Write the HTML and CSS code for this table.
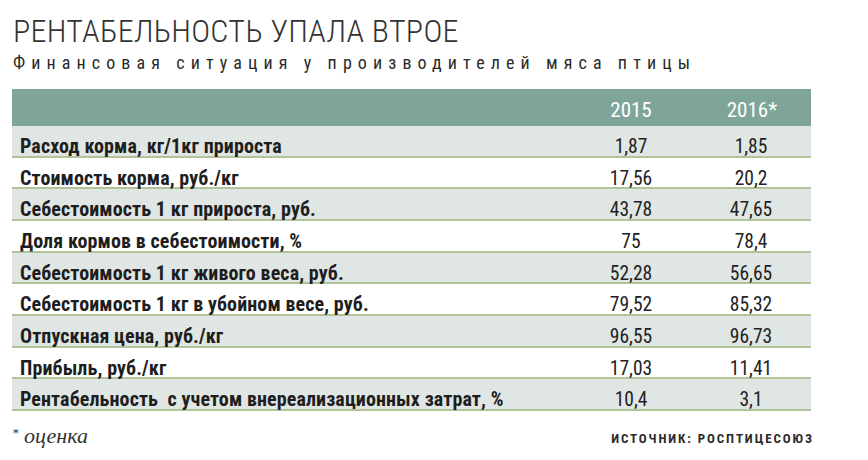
FILE: index.html
```html
<!DOCTYPE html>
<html lang="ru">
<head>
<meta charset="utf-8">
<link rel="stylesheet" href="styles.css">
</head>
<body>
<div class="page">
  <h1 class="title">РЕНТАБЕЛЬНОСТЬ УПАЛА ВТРОЕ</h1>
  <p class="subtitle">Финансовая ситуация у производителей мяса птицы</p>
  <div class="table">
    <div class="head">
      <div class="cell-label"></div>
      <div class="cell-num">2015</div>
      <div class="cell-num">2016*</div>
    </div>
    <div class="row shade"><div class="cell-label">Расход корма, кг/1кг прироста</div><div class="cell-num">1,87</div><div class="cell-num">1,85</div></div>
    <div class="row"><div class="cell-label">Стоимость корма, руб./кг</div><div class="cell-num">17,56</div><div class="cell-num">20,2</div></div>
    <div class="row shade"><div class="cell-label">Себестоимость 1 кг прироста, руб.</div><div class="cell-num">43,78</div><div class="cell-num">47,65</div></div>
    <div class="row"><div class="cell-label">Доля кормов в себестоимости, %</div><div class="cell-num">75</div><div class="cell-num">78,4</div></div>
    <div class="row shade"><div class="cell-label">Себестоимость 1 кг живого веса, руб.</div><div class="cell-num">52,28</div><div class="cell-num">56,65</div></div>
    <div class="row"><div class="cell-label">Себестоимость 1 кг в убойном весе, руб.</div><div class="cell-num">79,52</div><div class="cell-num">85,32</div></div>
    <div class="row shade"><div class="cell-label">Отпускная цена, руб./кг</div><div class="cell-num">96,55</div><div class="cell-num">96,73</div></div>
    <div class="row"><div class="cell-label">Прибыль, руб./кг</div><div class="cell-num">17,03</div><div class="cell-num">11,41</div></div>
    <div class="row shade"><div class="cell-label">Рентабельность&nbsp; с учетом внереализационных затрат, %</div><div class="cell-num">10,4</div><div class="cell-num">3,1</div></div>
  </div>
  <div class="footer">
    <span class="note"><span class="star">*</span> оценка</span>
    <span class="source">ИСТОЧНИК: РОСПТИЦЕСОЮЗ</span>
  </div>
</div>
</body>
</html>
```
FILE: styles.css
```css
html, body {
  margin: 0;
  padding: 0;
  background: #ffffff;
}
.page {
  width: 868px;
  height: 460px;
  padding: 0 0 0 12px;
  box-sizing: border-box;
  color: #222222;
  font-family: Roboto, "Open Sans", sans-serif;
  font-stretch: 75%;
}
.title {
  margin: 0;
  padding: 13px 0 0 1px;
  font-size: 32px;
  line-height: 36px;
  font-weight: 300;
  font-stretch: 87%;
  color: #333333;
  letter-spacing: 0.3px;
}
.subtitle {
  margin: 0;
  padding: 2px 0 0 1px;
  font-size: 18px;
  line-height: 23px;
  font-weight: 400;
  letter-spacing: 6.1px;
  color: #2a2a2a;
}
.table {
  width: 799px;
  margin-top: 15px;
}
.head, .row {
  display: grid;
  grid-template-columns: 559px 120px 120px;
}
.head {
  height: 37px;
  background: #7fa59b;
  color: #ffffff;
  font-size: 21px;
  line-height: 22px;
  padding-top: 10px;
  box-sizing: border-box;
}
.head .cell-num {
  text-align: center;
}
.head .cell-num:last-child {
  padding-left: 2px;
}
.row {
  height: 31.67px;
  box-sizing: border-box;
  border-bottom: 2px solid #b2c29b;
  padding-top: 11px;
  font-size: 19.5px;
  line-height: 19px;
}
.row.shade {
  background: #dfe6e3;
}
.cell-label {
  padding-left: 8px;
  font-weight: 700;
  font-size: 20px;
  letter-spacing: 0.1px;
  color: #1e1e1e;
}
.cell-num {
  text-align: center;
  font-weight: 400;
}
.footer {
  display: flex;
  justify-content: space-between;
  align-items: baseline;
  width: 802px;
  margin-top: 12px;
}
.note {
  font-family: "Liberation Serif", "DejaVu Serif", serif;
  font-style: italic;
  font-stretch: 100%;
  font-size: 22px;
  color: #333333;
}
.star {
  font-size: 13px;
  vertical-align: 6px;
}
.source {
  font-size: 13px;
  font-weight: 700;
  letter-spacing: 1.9px;
  color: #2a2a2a;
}
```
